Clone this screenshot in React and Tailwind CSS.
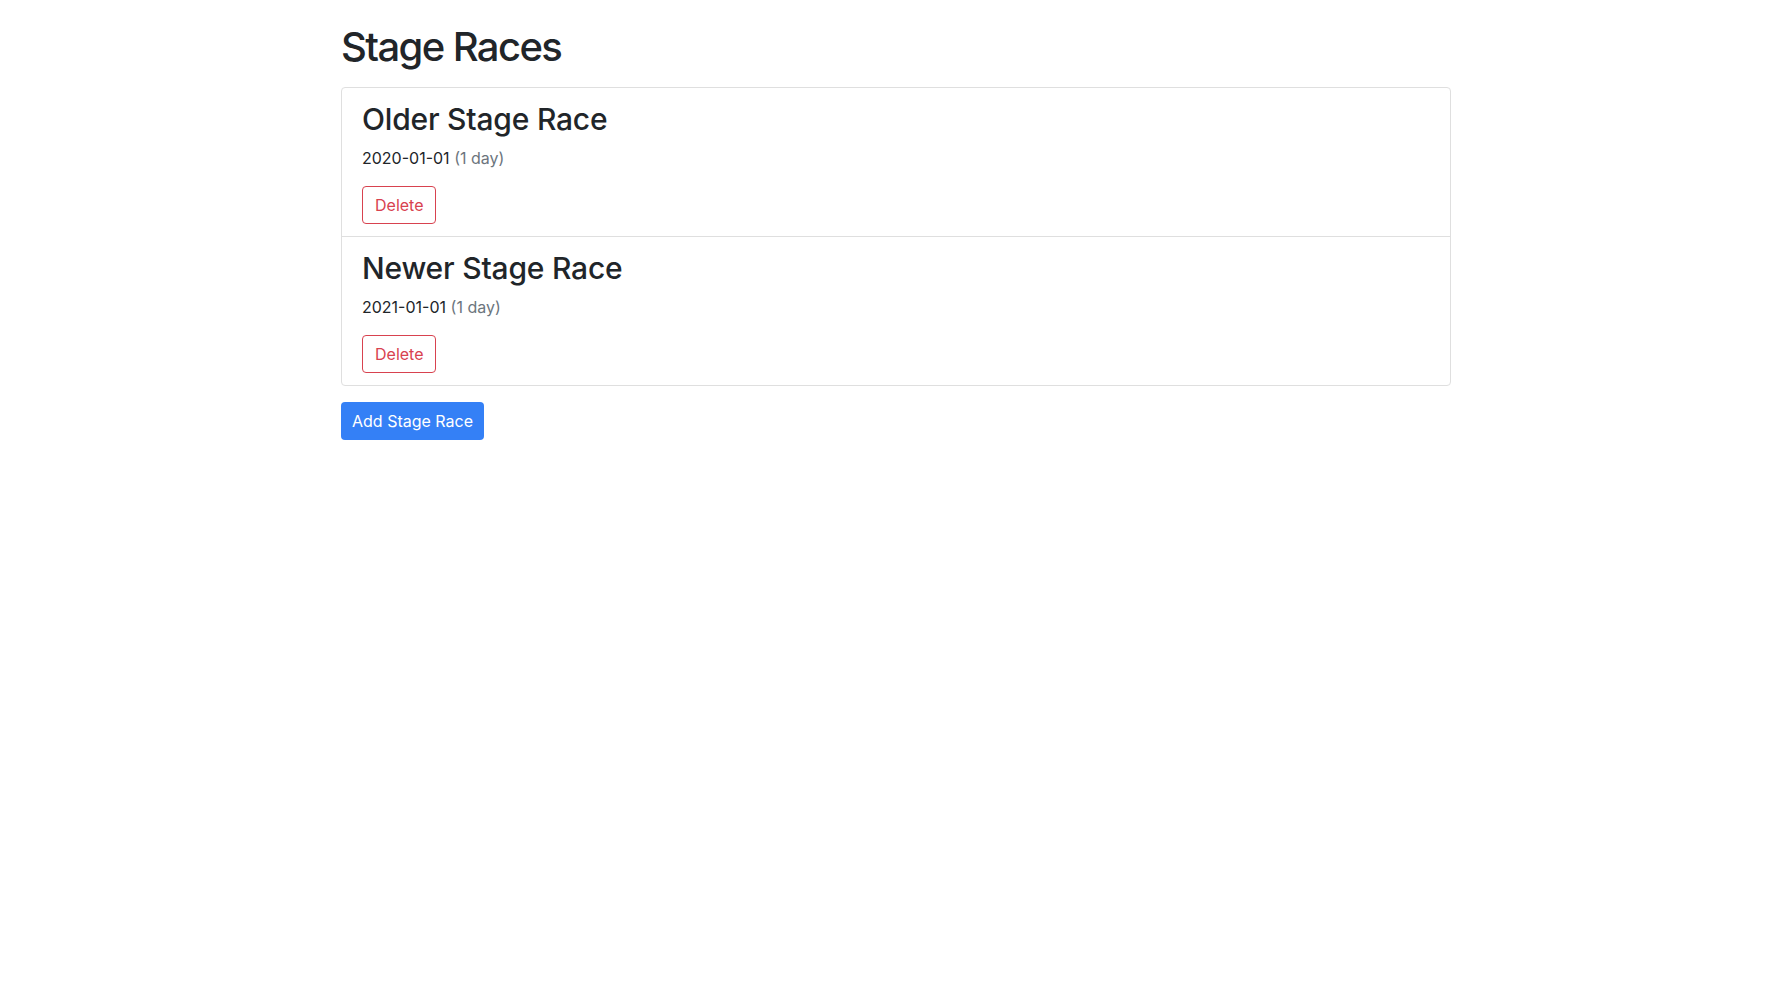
const races = [
  { name: 'Older Stage Race', date: '2020-01-01', days: 1 },
  { name: 'Newer Stage Race', date: '2021-01-01', days: 1 },
];

function RaceItem({ race, first }) {
  return (
    <div className={`px-5 py-3 ${first ? '' : 'border-t border-[#dfdfdf]'}`}>
      <h3 className="text-[30px] leading-[38px] font-medium tracking-[-0.2px] text-[#212529]">{race.name}</h3>
      <p className="mt-2 text-[16px] leading-6 text-[#212529]">
        {race.date} <span className="text-[#6c757d]">({race.days} day{race.days === 1 ? '' : 's'})</span>
      </p>
      <button className="mt-4 h-[38px] px-3 text-[16px] leading-6 text-[#d8424f] border border-[#d8424f] rounded-[4px] bg-white">
        Delete
      </button>
    </div>
  );
}

export default function App() {
  return (
    <div className="min-h-screen bg-white font-['Inter','Liberation_Sans',sans-serif]">
      <div className="w-[1110px] mx-auto pt-[23px]">
        <h1 className="text-[40px] leading-[48px] font-medium tracking-[-1.6px] text-[#212529] mb-4">Stage Races</h1>
        <div className="border border-[#dfdfdf] rounded-[4px]">
          {races.map((race, i) => (
            <RaceItem key={race.name} race={race} first={i === 0} />
          ))}
        </div>
        <button className="mt-4 h-[38px] px-[11px] text-[16px] leading-6 text-white bg-[#3480f6] rounded-[4px]">
          Add Stage Race
        </button>
      </div>
    </div>
  );
}
